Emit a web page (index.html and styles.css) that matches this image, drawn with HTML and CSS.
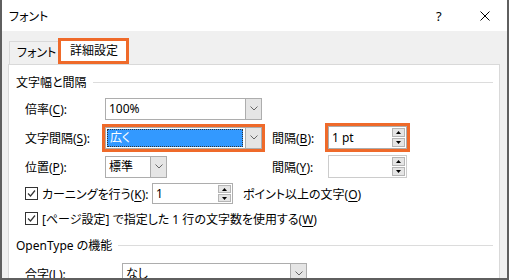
FILE: index.html
```html
<!DOCTYPE html>
<html lang="ja">
<head>
    <meta charset="UTF-8">
    <title>フォント</title>
    <link rel="stylesheet" href="styles.css">
</head>
<body>
    <div class="window">
        <!-- タイトルバー -->
        <div class="titlebar">
            <span class="title">フォント</span>
            <span class="help">?</span>
            <svg class="close" width="10" height="10" viewBox="0 0 10 10"><path d="M0.5 0.5 L9.5 9.5 M9.5 0.5 L0.5 9.5" stroke="#000" stroke-width="1" fill="none"/></svg>
        </div>

        <div class="client">
            <!-- タブ -->
            <div class="tabs">
                <div class="tab">フォント</div>
                <div class="tab tab-active">詳細設定</div>
            </div>

            <div class="panel">
                <div class="group-title">文字幅と間隔</div>

                <div class="row">
                    <span class="lbl">倍率(<u>C</u>):</span>
                    <div class="cell">
                        <div class="combo combo-wide">
                            <span class="combo-text">100%</span>
                            <span class="combo-btn"><svg width="8" height="5" viewBox="0 0 8 5"><polyline points="0.5,0.5 4,4 7.5,0.5" fill="none" stroke="#666" stroke-width="1"/></svg></span>
                        </div>
                    </div>
                </div>

                <div class="row">
                    <span class="lbl">文字間隔(<u>S</u>):</span>
                    <div class="cell">
                        <div class="combo combo-wide mark">
                            <span class="combo-text selected">広く</span>
                            <span class="combo-btn"><svg width="8" height="5" viewBox="0 0 8 5"><polyline points="0.5,0.5 4,4 7.5,0.5" fill="none" stroke="#666" stroke-width="1"/></svg></span>
                        </div>
                    </div>
                    <span class="lbl-right">間隔(<u>B</u>):</span>
                    <div class="spin mark">
                        <span class="spin-text">1 pt</span>
                        <span class="spin-btns">
                            <span class="spin-btn"><svg width="5" height="3" viewBox="0 0 5 3"><polygon points="2.5,0 5,3 0,3" fill="#000"/></svg></span>
                            <span class="spin-btn"><svg width="5" height="3" viewBox="0 0 5 3"><polygon points="0,0 5,0 2.5,3" fill="#000"/></svg></span>
                        </span>
                    </div>
                </div>

                <div class="row">
                    <span class="lbl">位置(<u>P</u>):</span>
                    <div class="cell">
                        <div class="combo combo-small">
                            <span class="combo-text">標準</span>
                            <span class="combo-btn"><svg width="8" height="5" viewBox="0 0 8 5"><polyline points="0.5,0.5 4,4 7.5,0.5" fill="none" stroke="#666" stroke-width="1"/></svg></span>
                        </div>
                    </div>
                    <span class="lbl-right">間隔(<u>Y</u>):</span>
                    <div class="spin spin-disabled">
                        <span class="spin-text"></span>
                        <span class="spin-btns">
                            <span class="spin-btn"><svg width="5" height="3" viewBox="0 0 5 3"><polygon points="2.5,0 5,3 0,3" fill="#000"/></svg></span>
                            <span class="spin-btn"><svg width="5" height="3" viewBox="0 0 5 3"><polygon points="0,0 5,0 2.5,3" fill="#000"/></svg></span>
                        </span>
                    </div>
                </div>

                <div class="check-row">
                    <span class="checkbox"><svg width="11" height="11" viewBox="0 0 11 11"><polyline points="2,5.5 4.5,8 9,2.5" fill="none" stroke="#333" stroke-width="1.2"/></svg></span>
                    <span class="check-lbl">カーニングを行う(<u>K</u>):</span>
                    <div class="spin spin-kern">
                        <span class="spin-text">1</span>
                        <span class="spin-btns">
                            <span class="spin-btn"><svg width="5" height="3" viewBox="0 0 5 3"><polygon points="2.5,0 5,3 0,3" fill="#000"/></svg></span>
                            <span class="spin-btn"><svg width="5" height="3" viewBox="0 0 5 3"><polygon points="0,0 5,0 2.5,3" fill="#000"/></svg></span>
                        </span>
                    </div>
                    <span class="after">ポイント以上の文字(<u>O</u>)</span>
                </div>

                <div class="check-row">
                    <span class="checkbox"><svg width="11" height="11" viewBox="0 0 11 11"><polyline points="2,5.5 4.5,8 9,2.5" fill="none" stroke="#333" stroke-width="1.2"/></svg></span>
                    <span>[ページ設定] で指定した 1 行の文字数を使用する(<u>W</u>)</span>
                </div>

                <div class="group-title group-title-2">OpenType の機能</div>

                <div class="row">
                    <span class="lbl lbl-long">合字(<u>L</u>):</span>
                    <div class="combo combo-liga">
                        <span class="combo-text">なし</span>
                        <span class="combo-btn"><svg width="8" height="5" viewBox="0 0 8 5"><polyline points="0.5,0.5 4,4 7.5,0.5" fill="none" stroke="#666" stroke-width="1"/></svg></span>
                    </div>
                </div>
            </div>
        </div>
    </div>
</body>
</html>
```

FILE: styles.css
```css
* {
    box-sizing: border-box;
}

body {
    margin: 0;
    font-family: "Noto Sans", "Noto Sans CJK JP", sans-serif;
    font-size: 12px;
    font-feature-settings: "palt" 1;
    color: #000;
    background-color: #fff;
}

u {
    text-underline-offset: 2px;
}

.window {
    width: 509px;
    height: 280px;
    border: 2px solid #5f5f5f;
    border-top: none;
    display: flex;
    flex-direction: column;
    overflow: hidden;
}

/* タイトルバー */
.titlebar {
    height: 31px;
    flex-shrink: 0;
    display: flex;
    align-items: center;
    padding-left: 7px;
    background-color: #fff;
}

.title {
    flex: 1;
}

.help {
    width: 7px;
    margin-right: 37px;
    font-size: 13px;
}

.close {
    margin-right: 17px;
}

.client {
    flex: 1;
    min-height: 0;
    display: flex;
    flex-direction: column;
    background-color: #f0f0f0;
    padding: 0 7px 0 6px;
}

/* タブ */
.tabs {
    height: 33px;
    flex-shrink: 0;
    display: flex;
    align-items: flex-end;
    padding-left: 1px;
}

.tab {
    width: 49px;
    height: 23px;
    padding: 1px 0 0 7px;
    line-height: 20px;
    border: 1px solid #d9d9d9;
    border-right: none;
    border-bottom: none;
}

.tab-active {
    width: 71px;
    height: 26px;
    padding: 0 0 0 9px;
    border: 3px solid #ef6a2a;
    background-color: #fff;
}

.panel {
    flex: 1;
    background-color: #fff;
    border: 1px solid #d9d9d9;
    padding-top: 5px;
}

.group-title {
    display: flex;
    align-items: center;
    gap: 6px;
    height: 24px;
    padding: 0 6px 0 7px;
}

.group-title::after {
    content: "";
    flex: 1;
    height: 1px;
    background-color: #dcdcdc;
}

.group-title-2 {
    height: 28px;
}

.row {
    display: flex;
    align-items: center;
    height: 29px;
    padding-left: 16px;
}

.lbl {
    width: 80px;
}

.lbl-long {
    width: 97px;
}

.cell {
    width: 167px;
}

.lbl-right {
    width: 56px;
}

/* コンボボックス */
.combo {
    display: flex;
    height: 22px;
    border: 1px solid #adadad;
    background-color: #fff;
}

.combo-wide {
    width: 157px;
}

.combo-small {
    width: 62px;
}

.combo-liga {
    width: 185px;
}

.combo-text {
    flex: 1;
    padding-left: 3px;
    line-height: 20px;
}

.combo-text.selected {
    margin: 1px 2px 1px 1px;
    line-height: 18px;
    background-color: #3399ff;
    color: #fff;
    outline: 1px dotted #333;
    outline-offset: -1px;
}

.combo-btn {
    width: 16px;
    display: flex;
    align-items: center;
    justify-content: center;
    background-color: #e5e5e5;
    border-left: 1px solid #adadad;
}

.mark {
    outline: 3px solid #ef6a2a;
    outline-offset: 0;
}

/* スピンボックス */
.spin {
    display: flex;
    width: 79px;
    height: 23px;
    border: 1px solid #adadad;
    background-color: #fff;
}

.spin-disabled {
    border-color: #cccccc;
}

.spin-kern {
    width: 81px;
    height: 21px;
}

.spin-text {
    flex: 1;
    padding-left: 3px;
    line-height: 21px;
}

.spin-kern .spin-text {
    line-height: 19px;
}

.spin-btns {
    width: 14px;
    display: flex;
    flex-direction: column;
    gap: 1px;
    padding: 1px 1px 1px 0;
}

.spin-btn {
    flex: 1;
    display: flex;
    align-items: center;
    justify-content: center;
    background-color: #e5e5e5;
    border: 1px solid #b5b5b5;
}

/* チェックボックス */
.check-row {
    display: flex;
    align-items: center;
    height: 25px;
    padding-left: 16px;
}

.checkbox {
    width: 13px;
    height: 13px;
    margin-right: 4px;
    border: 1px solid #333;
    background-color: #fff;
    display: flex;
    align-items: center;
    justify-content: center;
}

.check-lbl {
    width: 110px;
}

.after {
    margin-left: 10px;
}
```
